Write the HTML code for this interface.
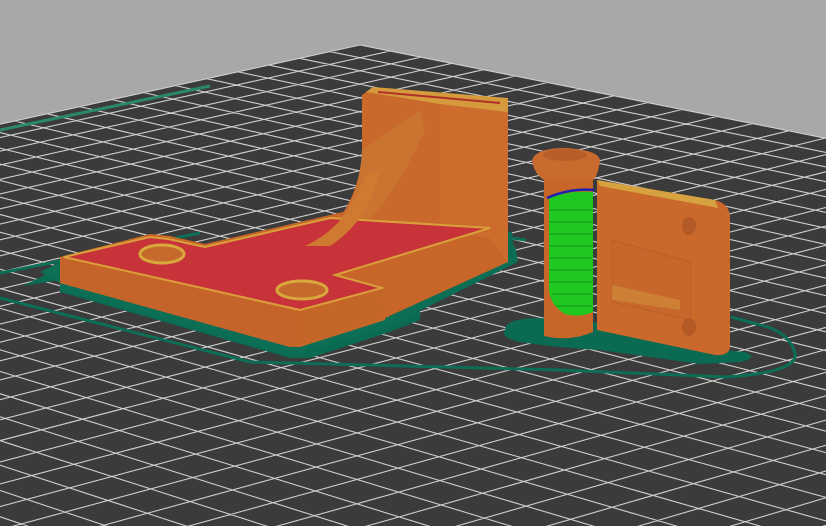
<!DOCTYPE html>
<html><head><meta charset="utf-8"><style>
html,body{margin:0;padding:0;background:#a8a8a8;overflow:hidden;width:826px;height:526px}
svg{display:block}
</style></head><body>
<svg id="s" width="826" height="526" viewBox="0 0 826 526" xmlns="http://www.w3.org/2000/svg">
<rect width="826" height="526" fill="#a8a8a8"/>
<g id="plate"></g>
<!-- brims -->
<path d="M22,286 L60,268 L60,292 L290,358 L310,358 L390,332 L420,320 L420,300 L515,262 L512,232 L470,226 L470,240 L390,295 L400,318 L300,338 L60,280 Z" fill="#0a6a52"/>
<path d="M40,272 L60,262 L60,290 L290,356 L385,328 L518,262 L515,245 L505,262 L385,318 L300,347 L60,283 Z" fill="#0b6e55"/>
<path d="M505,330 Q505,318 540,318 L595,322 L700,348 L745,352 Q760,358 740,362 L700,364 L600,350 Q560,348 520,342 Q500,338 505,330 Z" fill="#0a6a52"/>
<!-- skirt -->
<path d="M0,298 L250,362 L560,370 L726,377 Q800,372 795,353 Q790,335 768,327 L731,317" fill="none" stroke="#0b6e55" stroke-width="3"/>
<path d="M526,240 L505,237 M200,233 L0,273" fill="none" stroke="#0b6e55" stroke-width="3"/>
<path d="M0,130 L210,86" fill="none" stroke="#2a8a66" stroke-width="3"/>
<!-- left base -->
<path d="M60,257 L150,234 L170,236 L205,244 L360,208 L480,225 L508,240 L508,262 L385,318 L385,320 L300,347 L290,347 L60,283 Z" fill="#c8662a"/>
<path d="M60,258 L300,312 L300,347 L290,347 L60,283 Z" fill="#c4632a"/>
<path d="M300,312 L383,290 L385,318 L300,347 Z" fill="#c56629"/>
<!-- wall -->
<path d="M362,95 L372,88 L440,98 L440,232 L310,247 Q360,210 362,150 Z" fill="#c9692b"/>
<path d="M440,100 L508,110 L508,262 L490,238 L440,232 Z" fill="#cd6c2c"/>
<path d="M366,92 L373,87 L508,98 L508,112 L440,104 Z" fill="#d49a3c"/>
<path d="M378,92 L500,103" stroke="#b03028" stroke-width="2"/>
<path d="M362,150 Q360,210 320,240 L345,240 Q390,210 425,130 L420,110 Z" fill="#c98a3a" opacity="0.35"/>
<!-- red top face -->
<path d="M64,257 L150,237 L168,239 L205,247 L330,218 L490,228 L335,275 L382,288 L300,310 Z" fill="#c8333a" stroke="#d9a03a" stroke-width="2"/>
<path d="M305,246 Q350,225 365,175 L380,170 Q370,220 330,246 Z" fill="#cf7a30"/>
<ellipse cx="162" cy="254" rx="22" ry="9" fill="#c56a2c" stroke="#d9a83a" stroke-width="3"/>
<ellipse cx="302" cy="290" rx="25" ry="9" fill="#c56a2c" stroke="#d9a83a" stroke-width="3"/>
<!-- cylinder -->
<path d="M544,175 L593,175 L593,332 Q570,342 544,336 Z" fill="#c8662a"/>
<path d="M532,160 Q536,148 565,148 Q598,150 600,160 Q598,176 593,180 L544,180 Q534,174 532,160 Z" fill="#c96a2e"/>
<ellipse cx="565" cy="155" rx="22" ry="6" fill="#b85e28"/>
<path d="M549,198 Q570,190 593,192 L593,312 Q580,318 565,314 Q550,305 549,290 Z" fill="#1ec81e"/>
<path d="M547,198 Q570,188 594,190" stroke="#2020b0" stroke-width="2.5" fill="none"/>
<g stroke="#128012" stroke-width="1" opacity="0.8">
<path d="M550,210 H592 M550,222 H592 M550,234 H592 M550,246 H592 M550,258 H592 M550,270 H592 M550,282 H592 M552,294 H592 M556,306 H592"/>
</g>
<!-- plate -->
<path d="M597,180 L715,200 Q730,204 730,218 L730,348 Q728,356 715,355 L597,330 Z" fill="#ca692b"/>
<path d="M597,180 L715,200 L718,208 L600,186 Z" fill="#d6a240"/>
<path d="M612,240 L690,262 L690,320 L612,302 Z" fill="#c7672c" stroke="#b85e28" stroke-width="1"/>
<path d="M612,285 L680,300 L680,310 L612,300 Z" fill="#d49a3e" opacity="0.5"/>
<ellipse cx="689" cy="226" rx="7" ry="9" fill="#b35a26"/>
<ellipse cx="689" cy="327" rx="7" ry="9" fill="#b35a26"/>
</svg>
<script>
(function(){
var ns="http://www.w3.org/2000/svg";
var P=[[360,45],[1699,313],[450,700],[-740,287]];
var x0=P[0][0],y0=P[0][1],x1=P[1][0],y1=P[1][1],x2=P[2][0],y2=P[2][1],x3=P[3][0],y3=P[3][1];
var dx1=x1-x2,dx2=x3-x2,dx3=x0-x1+x2-x3,dy1=y1-y2,dy2=y3-y2,dy3=y0-y1+y2-y3;
var den=dx1*dy2-dx2*dy1;
var g=(dx3*dy2-dx2*dy3)/den,h=(dx1*dy3-dx3*dy1)/den;
var a=x1-x0+g*x1,b=x3-x0+h*x3,c=x0,d=y1-y0+g*y1,e=y3-y0+h*y3,f=y0;
function m(u,v){var w=g*u+h*v+1;return [(a*u+b*v+c)/w,(d*u+e*v+f)/w];}
var G=document.getElementById("plate");
var poly=document.createElementNS(ns,"polygon");
poly.setAttribute("points",P.map(function(p){return p.join(",")}).join(" "));
poly.setAttribute("fill","#3b3b3b");G.appendChild(poly);
var NU=34,NV=32,dstr="";
for(var i=0;i<=NU;i++){var u=i/NU,p=m(u,0),q=m(u,1);dstr+="M"+p[0].toFixed(1)+","+p[1].toFixed(1)+"L"+q[0].toFixed(1)+","+q[1].toFixed(1);}
for(var j=0;j<=NV;j++){var v=j/NV,p=m(0,v),q=m(1,v);dstr+="M"+p[0].toFixed(1)+","+p[1].toFixed(1)+"L"+q[0].toFixed(1)+","+q[1].toFixed(1);}
var pa=document.createElementNS(ns,"path");
pa.setAttribute("d",dstr);pa.setAttribute("stroke","#cfcfcf");pa.setAttribute("stroke-width","1.1");pa.setAttribute("fill","none");
G.appendChild(pa);
})();
</script>
</body></html>
